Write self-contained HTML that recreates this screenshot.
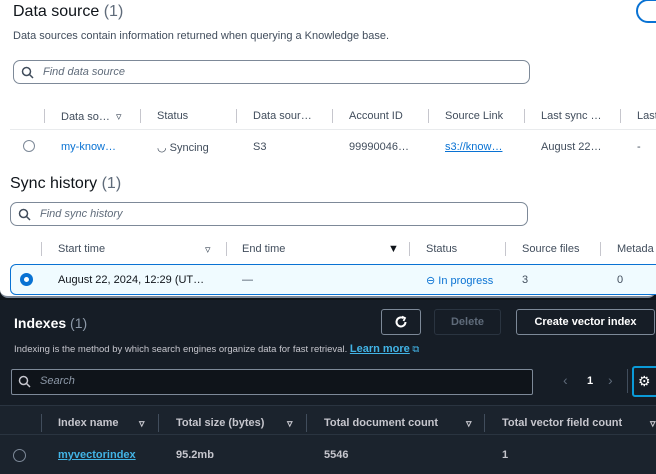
<!DOCTYPE html>
<html><head><meta charset="utf-8"><style>
*{box-sizing:border-box;margin:0;padding:0}
body{width:656px;height:474px;overflow:hidden;background:#0f141a;font-family:"Liberation Sans",sans-serif;position:relative}
.a{position:absolute;white-space:nowrap}
.light{position:absolute;left:0;top:0;width:656px;height:298px;background:#fff;border-radius:0 0 8px 8px;border-bottom:2px solid #7d8998}
.h{color:#0f141a;font-size:16px}
.h span{color:#5f6b7a}
.t{font-size:11px;color:#414d5c}
.sb{position:absolute;border:1px solid #7d8998;border-radius:7px;height:24px}
.ph{font-style:italic;color:#5f6b7a;font-size:11px}
.th{font-size:11px;color:#414d5c}
.sep{position:absolute;width:1px;height:14px;background:#c6c6cd}
.lk{color:#0972d3}
.dsep{position:absolute;width:1px;height:18px;background:#414d5c}
.dh{font-size:11px;color:#c6c6cd;font-weight:bold}
</style></head><body>
<div class="light">
<div class="a h" style="left:13px;top:3px">Data source <span>(1)</span></div>
<div class="a" style="left:636px;top:-1px;width:40px;height:24px;border:2px solid #0972d3;border-radius:14px"></div>
<div class="a t" style="left:13px;top:30px">Data sources contain information returned when querying a Knowledge base.</div>
<div class="sb" style="left:13px;top:60px;width:517px"></div>
<svg class="a" style="left:21px;top:66px" width="13" height="13" viewBox="0 0 13 13"><circle cx="5.5" cy="5.5" r="4" fill="none" stroke="#414d5c" stroke-width="1.5"/><path d="M8.5 8.5L12 12" stroke="#414d5c" stroke-width="1.5"/></svg>
<div class="a ph" style="left:43px;top:66px">Find data source</div>
<div class="sep" style="left:44px;top:109px"></div>
<div class="a th" style="left:61px;top:110px">Data so… &nbsp;▿</div>
<div class="sep" style="left:140px;top:109px"></div>
<div class="a th" style="left:157px;top:110px">Status</div>
<div class="sep" style="left:236px;top:109px"></div>
<div class="a th" style="left:253px;top:110px">Data sour…</div>
<div class="sep" style="left:332px;top:109px"></div>
<div class="a th" style="left:349px;top:110px">Account ID</div>
<div class="sep" style="left:428px;top:109px"></div>
<div class="a th" style="left:445px;top:110px">Source Link</div>
<div class="sep" style="left:524px;top:109px"></div>
<div class="a th" style="left:541px;top:110px">Last sync …</div>
<div class="sep" style="left:620px;top:109px"></div>
<div class="a th" style="left:637px;top:110px">Last</div>
<div class="a" style="left:10px;top:129px;width:646px;height:1px;background:#e9ebed"></div>
<div class="a" style="left:23px;top:140px;width:12px;height:12px;border:1.5px solid #7d8998;border-radius:50%"></div>
<div class="a th lk" style="left:61px;top:141px">my-know…</div>
<div class="a th" style="left:157px;top:141px">◡ Syncing</div>
<div class="a th" style="left:253px;top:141px">S3</div>
<div class="a th" style="left:349px;top:141px">99990046…</div>
<div class="a th" style="left:445px;top:141px;color:#0972d3;text-decoration:underline">s3://know…</div>
<div class="a th" style="left:541px;top:141px">August 22…</div>
<div class="a th" style="left:637px;top:141px">-</div>
<div class="a h" style="left:10px;top:175px">Sync history <span>(1)</span></div>
<div class="sb" style="left:10px;top:202px;width:518px"></div>
<svg class="a" style="left:18px;top:208px" width="13" height="13" viewBox="0 0 13 13"><circle cx="5.5" cy="5.5" r="4" fill="none" stroke="#414d5c" stroke-width="1.5"/><path d="M8.5 8.5L12 12" stroke="#414d5c" stroke-width="1.5"/></svg>
<div class="a ph" style="left:40px;top:208px">Find sync history</div>
<div class="sep" style="left:41px;top:242px"></div>
<div class="a th" style="left:58px;top:243px">Start time</div>
<div class="a th" style="left:205px;top:243px">▿</div>
<div class="sep" style="left:226px;top:242px"></div>
<div class="a th" style="left:242px;top:243px">End time</div>
<div class="a th" style="left:388px;top:243px;color:#0f141a">▼</div>
<div class="sep" style="left:409px;top:242px"></div>
<div class="a th" style="left:426px;top:243px">Status</div>
<div class="sep" style="left:505px;top:242px"></div>
<div class="a th" style="left:522px;top:243px">Source files</div>
<div class="sep" style="left:600px;top:242px"></div>
<div class="a th" style="left:617px;top:243px">Metada</div>
<div class="a" style="left:10px;top:264px;width:660px;height:31px;background:#f0fbff;border:1.5px solid #0972d3;border-radius:6px"></div>
<div class="a" style="left:20px;top:273px;width:13px;height:13px;border:4px solid #0972d3;border-radius:50%;background:#fff"></div>
<div class="a th" style="left:58px;top:274px;color:#0f141a">August 22, 2024, 12:29 (UT…</div>
<div class="a th" style="left:242px;top:274px">—</div>
<div class="a th lk" style="left:426px;top:274px">⊖ In progress</div>
<div class="a th" style="left:522px;top:274px">3</div>
<div class="a th" style="left:617px;top:274px">0</div>
</div>
<div style="position:absolute;left:0;top:300px;width:656px;height:174px;background:#161d26">
<div class="a" style="left:14px;top:15px;font-size:14px;font-weight:bold;color:#fff">Indexes <span style="color:#8d99a8;font-weight:normal">(1)</span></div>
<div class="a" style="left:381px;top:9px;width:40px;height:26px;border:1.5px solid #7d8998;border-radius:3px"></div>
<svg class="a" style="left:394px;top:15px" width="14" height="14" viewBox="0 0 14 14"><path d="M11.5 7A4.5 4.5 0 1 1 9.5 3.2" fill="none" stroke="#fff" stroke-width="2"/><path d="M8 1.5L11 3L9.5 6" fill="none" stroke="#fff" stroke-width="1.8"/></svg>
<div class="a" style="left:434px;top:9px;width:67px;height:26px;border:1px solid #2a3440;border-radius:3px;color:#5f6b7a;font-size:11px;font-weight:bold;text-align:center;line-height:24px">Delete</div>
<div class="a" style="left:516px;top:9px;width:139px;height:26px;border:1.5px solid #7d8998;border-radius:3px;color:#fff;font-size:11px;font-weight:bold;text-align:center;line-height:24px">Create vector index</div>
<div class="a" style="left:14px;top:43px;font-size:9.5px;color:#c6c6cd">Indexing is the method by which search engines organize data for fast retrieval. <span style="color:#42b4e6;font-size:11px;text-decoration:underline;font-weight:bold">Learn more</span> <span style="color:#42b4e6">⧉</span></div>
<div class="a" style="left:11px;top:69px;width:522px;height:26px;border:1px solid #7d8998;border-radius:2px;background:#0f141a"></div>
<svg class="a" style="left:18px;top:75px" width="13" height="13" viewBox="0 0 13 13"><circle cx="5.5" cy="5.5" r="4" fill="none" stroke="#c6c6cd" stroke-width="1.5"/><path d="M8.5 8.5L12 12" stroke="#c6c6cd" stroke-width="1.5"/></svg>
<div class="a" style="left:40px;top:75px;font-size:11px;font-style:italic;color:#8d99a8">Search</div>
<div class="a" style="left:563px;top:72px;font-size:14px;color:#5f6b7a">‹</div>
<div class="a" style="left:587px;top:75px;font-size:11px;color:#fff;font-weight:bold">1</div>
<div class="a" style="left:608px;top:72px;font-size:14px;color:#5f6b7a">›</div>
<div class="a" style="left:627px;top:69px;width:1px;height:24px;background:#414d5c"></div>
<div class="a" style="left:632px;top:66px;width:30px;height:31px;border:2px solid #0a9ad8;border-radius:3px;color:#fff;font-size:14px;line-height:26px;padding-left:4px">⚙</div>
<div class="a" style="left:0;top:105px;width:656px;height:69px;background:#1b232d;border-top:1px solid #2a3440"></div>
<div class="dsep" style="left:41px;top:114px"></div>
<div class="a dh" style="left:58px;top:117px">Index name</div>
<div class="a dh" style="left:139px;top:117px">▿</div>
<div class="dsep" style="left:158px;top:114px"></div>
<div class="a dh" style="left:176px;top:117px">Total size (bytes)</div>
<div class="a dh" style="left:287px;top:117px">▿</div>
<div class="dsep" style="left:306px;top:114px"></div>
<div class="a dh" style="left:324px;top:117px">Total document count</div>
<div class="a dh" style="left:466px;top:117px">▿</div>
<div class="dsep" style="left:484px;top:114px"></div>
<div class="a dh" style="left:502px;top:117px">Total vector field count</div>
<div class="a dh" style="left:650px;top:117px">▿</div>
<div class="a" style="left:0;top:134px;width:656px;height:1px;background:#2a3440"></div>
<div class="a" style="left:13px;top:149px;width:13px;height:13px;border:1.5px solid #7d8998;border-radius:50%"></div>
<div class="a" style="left:58px;top:149px;font-size:11px;font-weight:bold;color:#42b4e6;text-decoration:underline">myvectorindex</div>
<div class="a" style="left:176px;top:149px;font-size:11px;font-weight:bold;color:#c6c6cd">95.2mb</div>
<div class="a" style="left:324px;top:149px;font-size:11px;font-weight:bold;color:#c6c6cd">5546</div>
<div class="a" style="left:502px;top:149px;font-size:11px;font-weight:bold;color:#c6c6cd">1</div>
</div>
</body></html>
